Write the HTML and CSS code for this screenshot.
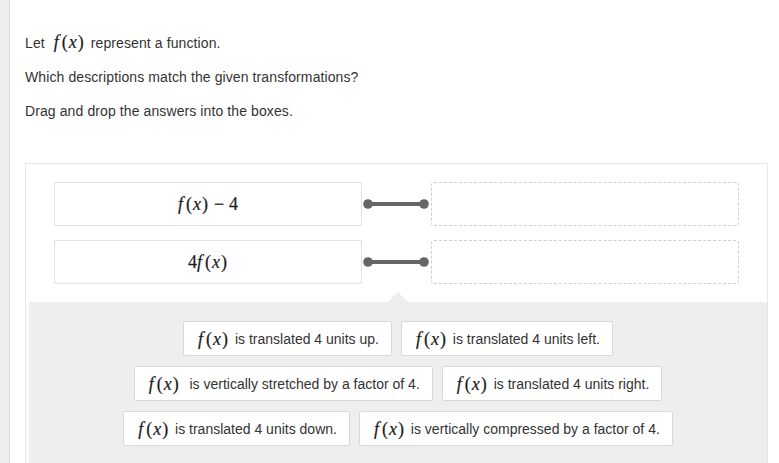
FILE: index.html
```html
<!DOCTYPE html>
<html lang="en">

<head>
    <meta charset="UTF-8">
    <title>Match the transformations</title>
    <link rel="stylesheet" href="styles.css">
</head>

<body>
    <div class="page">
        <div class="side-strip"></div>
        <div class="main">
            <p>Let <span class="math"><i>f</i><span class="paren">(</span><i>x</i><span class="paren">)</span></span> represent a function.</p>
            <p>Which descriptions match the given transformations?</p>
            <p>Drag and drop the answers into the boxes.</p>

            <div class="panel">
                <div class="match-area">
                    <div class="match-row">
                        <div class="prompt-box">
                            <span class="math big"><i>f</i><span class="paren">(</span><i>x</i><span class="paren">)</span><span class="op">−</span>4</span>
                        </div>
                        <svg class="connector" width="69" height="44" viewBox="0 0 69 44">
                            <line x1="6" y1="22" x2="62" y2="22" stroke="#666" stroke-width="4"></line>
                            <circle cx="6" cy="22" r="4.8" fill="#666"></circle>
                            <circle cx="62" cy="22" r="4.8" fill="#666"></circle>
                        </svg>
                        <div class="drop-box"></div>
                    </div>
                    <div class="match-row">
                        <div class="prompt-box">
                            <span class="math big">4<i>f</i><span class="paren">(</span><i>x</i><span class="paren">)</span></span>
                        </div>
                        <svg class="connector" width="69" height="44" viewBox="0 0 69 44">
                            <line x1="6" y1="22" x2="62" y2="22" stroke="#666" stroke-width="4"></line>
                            <circle cx="6" cy="22" r="4.8" fill="#666"></circle>
                            <circle cx="62" cy="22" r="4.8" fill="#666"></circle>
                        </svg>
                        <div class="drop-box"></div>
                    </div>
                </div>

                <div class="answer-tray">
                    <div class="chip-row">
                        <div class="chip"><span class="math"><i>f</i><span class="paren">(</span><i>x</i><span class="paren">)</span></span> is translated 4 units up.</div>
                        <div class="chip"><span class="math"><i>f</i><span class="paren">(</span><i>x</i><span class="paren">)</span></span> is translated 4 units left.</div>
                    </div>
                    <div class="chip-row">
                        <div class="chip"><span class="math"><i>f</i><span class="paren">(</span><i>x</i><span class="paren">)</span></span>&nbsp; is vertically stretched by a factor of 4.</div>
                        <div class="chip"><span class="math"><i>f</i><span class="paren">(</span><i>x</i><span class="paren">)</span></span> is translated 4 units right.</div>
                    </div>
                    <div class="chip-row">
                        <div class="chip"><span class="math"><i>f</i><span class="paren">(</span><i>x</i><span class="paren">)</span></span> is translated 4 units down.</div>
                        <div class="chip"><span class="math"><i>f</i><span class="paren">(</span><i>x</i><span class="paren">)</span></span> is vertically compressed by a factor of 4.</div>
                    </div>
                </div>
            </div>
        </div>
    </div>
</body>
</html>
```

FILE: styles.css
```css
body {
    margin: 0;
    font-family: "Liberation Sans", Arial, sans-serif;
    font-size: 14px;
    color: #333;
    background-color: white;
}

.page {
    display: flex;
    min-height: 463px;
}

.side-strip {
    width: 9px;
    flex-shrink: 0;
    background-color: #eeeeee;
    border-right: 1px solid #dddddd;
}

.main {
    flex: 1;
    padding: 33px 11px 0 15px;
}

.main p {
    margin: 0 0 14px;
    line-height: 20px;
    letter-spacing: 0.1px;
}

.main p .math {
    margin: 0 2px 0 5px;
}

/* math bits, roughly like MathJax output */
.math {
    font-family: "Liberation Serif", "Times New Roman", serif;
    font-size: 18px;
    line-height: 1;
    color: #1a1a1a;
    -webkit-text-stroke: 0.2px #1a1a1a;
    white-space: nowrap;
    margin: 0 2px;
    letter-spacing: 0;
}

.math i {
    font-style: italic;
}

.math .paren {
    margin-left: 3px;
    margin-right: 1px;
}

.math .paren + i + .paren {
    margin-left: 1px;
}

.math .op {
    margin: 0 5px;
}

.panel {
    margin-top: 42px;
    border: 1px solid #e6e6e6;
    border-bottom: none;
}

.match-area {
    padding: 18px 0;
    display: flex;
    flex-direction: column;
    gap: 14px;
}

.match-row {
    display: flex;
    justify-content: center;
    align-items: center;
}

.prompt-box {
    width: 308px;
    height: 44px;
    box-sizing: border-box;
    border: 1px solid #e2e2e2;
    background-color: white;
    display: flex;
    align-items: center;
    justify-content: center;
}

.connector {
    display: block;
}

.drop-box {
    width: 308px;
    height: 44px;
    box-sizing: border-box;
    border: 1px dashed #cfcfcf;
    border-radius: 3px;
}

.answer-tray {
    position: relative;
    margin-left: 3px;
    background-color: #eeeeee;
    padding: 19px 0 20px;
    display: flex;
    flex-direction: column;
    gap: 10px;
}

.answer-tray::before {
    content: "";
    position: absolute;
    top: -10px;
    left: 50%;
    margin-left: -10px;
    border-left: 10px solid transparent;
    border-right: 10px solid transparent;
    border-bottom: 10px solid #eeeeee;
}

.chip-row {
    display: flex;
    justify-content: center;
    gap: 9px;
}

.chip {
    height: 35px;
    box-sizing: border-box;
    padding: 0 12px;
    background-color: white;
    border: 1px solid #d9d9d9;
    border-radius: 2px;
    display: flex;
    align-items: center;
    white-space: pre;
}
```
